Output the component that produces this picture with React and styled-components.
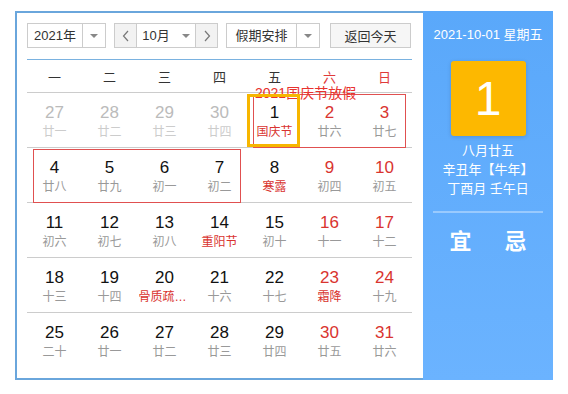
import React from 'react'
import styled, { createGlobalStyle } from 'styled-components'

const GlobalStyle = createGlobalStyle`
  body {
    margin: 0;
    background: #fff;
    font-family: "Liberation Sans", "Noto Sans CJK SC", sans-serif;
  }
`

const CELL = 55

const Wrapper = styled.div`
  display: flex;
  margin: 11px 0 0 15px;
  width: 538px;
  height: 369px;
`

const Main = styled.div`
  width: 408px;
  box-sizing: border-box;
  border: 2px solid #6aa6dc;
  border-right: none;
  padding: 10px 11px 10px 10px;
`

const Toolbar = styled.div`
  display: flex;
  height: 25px;
  margin-bottom: 11px;
`

const Select = styled.div`
  display: flex;
  box-sizing: border-box;
  width: ${p => p.w}px;
  height: 25px;
  margin-right: ${p => p.mr || 0}px;
  border: 1px solid #ccc;
  background: #fff;
  font-size: 13px;
  color: #333;
`

const SelectText = styled.div`
  flex: 1;
  display: flex;
  align-items: center;
  justify-content: center;
  line-height: 23px;
`

const ArrowBox = styled.div`
  width: 22px;
  display: flex;
  align-items: center;
  justify-content: center;
  border-left: 1px solid #ccc;
`

const Caret = styled.span`
  width: 0;
  height: 0;
  border-left: 4px solid transparent;
  border-right: 4px solid transparent;
  border-top: 4px solid #888;
  margin-left: ${p => p.ml || 0}px;
`

const NavBtn = styled.div`
  width: 21px;
  display: flex;
  align-items: center;
  justify-content: center;
  background: #f2f2f2;
  border-left: ${p => (p.right ? '1px solid #ccc' : 'none')};
  border-right: ${p => (p.right ? 'none' : '1px solid #ccc')};
`

const TodayButton = styled.div`
  box-sizing: border-box;
  width: 81px;
  height: 25px;
  margin-left: 10px;
  border: 1px solid #ccc;
  background: #f6f6f6;
  font-size: 13px;
  color: #333;
  display: flex;
  align-items: center;
  justify-content: center;
`

const Table = styled.div`
  border-top: 1px solid #7ab2e0;
  width: ${CELL * 7}px;
`

const WeekRow = styled.div`
  display: grid;
  grid-template-columns: repeat(7, ${CELL}px);
  height: 32px;
  border-bottom: 1px solid #ccc;
`

const WeekName = styled.div`
  display: flex;
  align-items: center;
  justify-content: center;
  font-size: 13px;
  color: ${p => (p.weekend ? '#e03a3a' : '#333')};
`

const Body = styled.div`
  position: relative;
`

const Row = styled.div`
  display: grid;
  grid-template-columns: repeat(7, ${CELL}px);
  height: ${CELL}px;
  box-sizing: border-box;
  border-bottom: ${p => (p.last ? 'none' : '1px solid #ccc')};
`

const Cell = styled.div`
  display: flex;
  flex-direction: column;
  align-items: center;
  padding-top: 10px;
`

const DayNum = styled.div`
  font-size: 17px;
  line-height: 20px;
  color: ${p => (p.dim ? '#bbb' : p.weekend ? '#d9342f' : '#111')};
`

const Lunar = styled.div`
  font-size: 12px;
  line-height: 18px;
  max-width: 52px;
  white-space: nowrap;
  overflow: hidden;
  text-overflow: ellipsis;
  color: ${p => (p.dim ? '#ccc' : p.festival ? '#d9342f' : '#999')};
`

const RangeBox = styled.div`
  position: absolute;
  box-sizing: border-box;
  border: 1px solid #e05050;
  pointer-events: none;
`

const RangeLabel = styled.div`
  position: absolute;
  top: -10px;
  left: 1px;
  font-size: 14px;
  line-height: 16px;
  color: #e8322e;
  white-space: nowrap;
`

const TodayMark = styled.div`
  position: absolute;
  box-sizing: border-box;
  width: 53px;
  height: 53px;
  border: 3px solid #f7b600;
  pointer-events: none;
`

const Side = styled.div`
  width: 130px;
  box-sizing: border-box;
  padding: 15px 10px 0;
  background: linear-gradient(#5aa8fa, #6bb3ff);
  color: #fff;
  display: flex;
  flex-direction: column;
  align-items: center;
`

const SideDate = styled.div`
  font-size: 13px;
  line-height: 18px;
  white-space: nowrap;
`

const BigDay = styled.div`
  margin-top: 17px;
  width: 75px;
  height: 75px;
  border-radius: 3px;
  background: #fdb800;
  box-shadow: 0 1px 4px rgba(0, 0, 0, 0.15);
  display: flex;
  align-items: center;
  justify-content: center;
  font-size: 48px;
  line-height: 1;
`

const LunarInfo = styled.div`
  margin-top: 5px;
  font-size: 13px;
  line-height: 19px;
  text-align: center;
`

const Divider = styled.div`
  margin-top: 13px;
  width: 110px;
  height: 2px;
  background: rgba(255, 255, 255, 0.35);
`

const Advice = styled.div`
  margin-top: 16px;
  width: 110px;
  display: grid;
  grid-template-columns: 1fr 1fr;
`

const AdviceItem = styled.div`
  text-align: center;
  font-size: 22px;
  line-height: 26px;
  font-weight: bold;
`

const Chevron = ({ dir }) => (
  <svg width="8" height="12" viewBox="0 0 8 12">
    <path
      d={dir === 'left' ? 'M6 1 L1.5 6 L6 11' : 'M2 1 L6.5 6 L2 11'}
      fill="none"
      stroke="#777"
      strokeWidth="1.2"
    />
  </svg>
)

const weeks = ['一', '二', '三', '四', '五', '六', '日']

const d = (n, lunar, opts = {}) => ({ n, lunar, ...opts })

const rows = [
  [d(27, '廿一', { dim: true }), d(28, '廿二', { dim: true }), d(29, '廿三', { dim: true }), d(30, '廿四', { dim: true }), d(1, '国庆节', { festival: true }), d(2, '廿六'), d(3, '廿七')],
  [d(4, '廿八'), d(5, '廿九'), d(6, '初一'), d(7, '初二'), d(8, '寒露', { festival: true }), d(9, '初四'), d(10, '初五')],
  [d(11, '初六'), d(12, '初七'), d(13, '初八'), d(14, '重阳节', { festival: true }), d(15, '初十'), d(16, '十一'), d(17, '十二')],
  [d(18, '十三'), d(19, '十四'), d(20, '骨质疏松日', { festival: true }), d(21, '十六'), d(22, '十七'), d(23, '霜降', { festival: true }), d(24, '十九')],
  [d(25, '二十'), d(26, '廿一'), d(27, '廿二'), d(28, '廿三'), d(29, '廿四'), d(30, '廿五'), d(31, '廿六')]
]

const ranges = [
  { row: 0, from: 4, to: 6, label: '2021国庆节放假' },
  { row: 1, from: 0, to: 3 }
]

const rangeStyle = r => ({
  left: r.from * CELL + 6,
  top: r.row * CELL + 1,
  width: (r.to - r.from + 1) * CELL - 12,
  height: 54
})

export default function App () {
  return (
    <React.Fragment>
      <GlobalStyle />
      <Wrapper>
        <Main>
          <Toolbar>
            <Select w={79} mr={8}>
              <SelectText>2021年</SelectText>
              <ArrowBox><Caret /></ArrowBox>
            </Select>
            <Select w={104} mr={8}>
              <NavBtn><Chevron dir="left" /></NavBtn>
              <SelectText>10月<Caret ml={12} /></SelectText>
              <NavBtn right><Chevron dir="right" /></NavBtn>
            </Select>
            <Select w={94}>
              <SelectText>假期安排</SelectText>
              <ArrowBox><Caret /></ArrowBox>
            </Select>
            <TodayButton>返回今天</TodayButton>
          </Toolbar>
          <Table>
            <WeekRow>
              {weeks.map((w, i) => (
                <WeekName key={w} weekend={i > 4}>{w}</WeekName>
              ))}
            </WeekRow>
            <Body>
              {rows.map((week, ri) => (
                <Row key={ri} last={ri === rows.length - 1}>
                  {week.map((day, ci) => (
                    <Cell key={ci}>
                      <DayNum dim={day.dim} weekend={ci > 4}>{day.n}</DayNum>
                      <Lunar dim={day.dim} festival={day.festival}>{day.lunar}</Lunar>
                    </Cell>
                  ))}
                </Row>
              ))}
              {ranges.map((r, i) => (
                <RangeBox key={i} style={rangeStyle(r)}>
                  {r.label && <RangeLabel>{r.label}</RangeLabel>}
                </RangeBox>
              ))}
              <TodayMark style={{ left: 4 * CELL, top: 1 }} />
            </Body>
          </Table>
        </Main>
        <Side>
          <SideDate>2021-10-01 星期五</SideDate>
          <BigDay>1</BigDay>
          <LunarInfo>
            八月廿五<br />
            辛丑年【牛年】<br />
            丁酉月 壬午日
          </LunarInfo>
          <Divider />
          <Advice>
            <AdviceItem>宜</AdviceItem>
            <AdviceItem>忌</AdviceItem>
          </Advice>
        </Side>
      </Wrapper>
    </React.Fragment>
  )
}
